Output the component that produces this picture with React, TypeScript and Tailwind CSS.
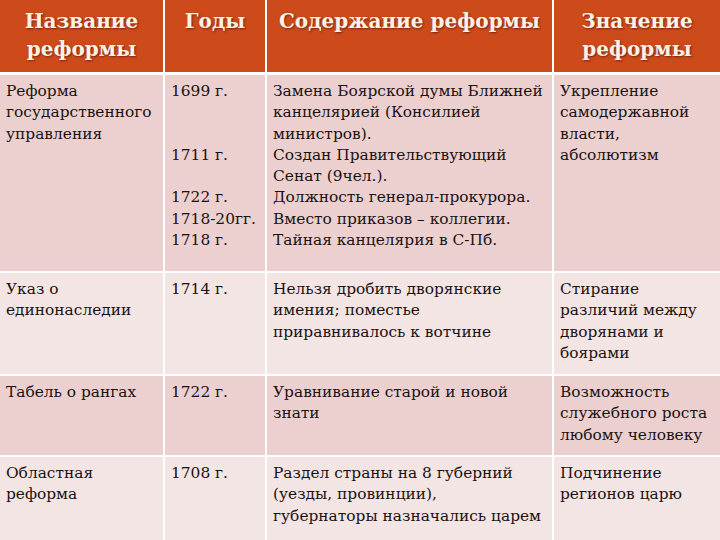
import React from "react"

// ─── Data ─────────────────────────────────────────────────────────────────────

type Row = {
  name: string[]
  years: string[]
  content: string[]
  meaning: string[]
  height: string
  shade: "dark" | "light"
}

const ROWS: Row[] = [
  {
    name: ["Реформа", "государственного", "управления"],
    years: ["1699 г.", "", "", "1711 г.", "", "1722 г.", "1718-20гг.", "1718 г."],
    content: [
      "Замена Боярской думы Ближней",
      "канцелярией (Консилией",
      "министров).",
      "Создан Правительствующий",
      "Сенат (9чел.).",
      "Должность генерал-прокурора.",
      "Вместо приказов – коллегии.",
      "Тайная канцелярия в С-Пб.",
    ],
    meaning: ["Укрепление", "самодержавной", "власти,", "абсолютизм"],
    height: "h-[196px]",
    shade: "dark",
  },
  {
    name: ["Указ о", "единонаследии"],
    years: ["1714 г."],
    content: ["Нельзя дробить дворянские", "имения; поместье", "приравнивалось к вотчине"],
    meaning: ["Стирание", "различий между", "дворянами и", "боярами"],
    height: "h-[101px]",
    shade: "light",
  },
  {
    name: ["Табель о рангах"],
    years: ["1722 г."],
    content: ["Уравнивание старой и новой", "знати"],
    meaning: ["Возможность", "служебного роста", "любому человеку"],
    height: "h-[79px]",
    shade: "dark",
  },
  {
    name: ["Областная", "реформа"],
    years: ["1708 г."],
    content: ["Раздел страны на 8 губерний", "(уезды, провинции),", "губернаторы назначались царем"],
    meaning: ["Подчинение", "регионов царю"],
    height: "h-[83px]",
    shade: "light",
  },
]

// ─── Cells ────────────────────────────────────────────────────────────────────

function Lines({ lines }: { lines: string[] }) {
  return (
    <>
      {lines.map((l, i) => (
        <div key={i} className="whitespace-nowrap">
          {l || "\u00a0"}
        </div>
      ))}
    </>
  )
}

function HeadCell({ lines }: { lines: string[] }) {
  return (
    <div className="bg-[#cd4a1b] pt-[7px] text-center text-[20px] font-bold leading-[28px] text-[#fbf1e4] [text-shadow:1px_1px_2px_rgba(60,10,0,0.6)]">
      <Lines lines={lines} />
    </div>
  )
}

export default function App() {
  return (
    <div
      className="h-[540px] w-[720px] overflow-hidden bg-white"
      style={{ fontFamily: '"DejaVu Serif", "Liberation Serif", serif' }}
    >
      <div className="grid grid-cols-[163px_100px_285px_1fr] gap-x-[2px]">
        <div className="col-span-4 grid h-[72px] grid-cols-subgrid">
          <HeadCell lines={["Название", "реформы"]} />
          <HeadCell lines={["Годы"]} />
          <HeadCell lines={["Содержание реформы"]} />
          <HeadCell lines={["Значение", "реформы"]} />
        </div>
        <div className="col-span-4 h-[3px]" />
        {ROWS.map((row, i) => {
          const bg = row.shade === "dark" ? "bg-[#ecd0d0]" : "bg-[#f4e5e5]"
          const cell = `${bg} pl-[6px] pt-[6px] text-[15.4px] leading-[21.3px] text-[#1a1212]`
          return (
            <React.Fragment key={i}>
              <div className={`col-span-4 grid grid-cols-subgrid ${row.height}`}>
                <div className={cell}>
                  <Lines lines={row.name} />
                </div>
                <div className={cell}>
                  <Lines lines={row.years} />
                </div>
                <div className={cell}>
                  <Lines lines={row.content} />
                </div>
                <div className={cell}>
                  <Lines lines={row.meaning} />
                </div>
              </div>
              <div className="col-span-4 h-[2px]" />
            </React.Fragment>
          )
        })}
      </div>
    </div>
  )
}
